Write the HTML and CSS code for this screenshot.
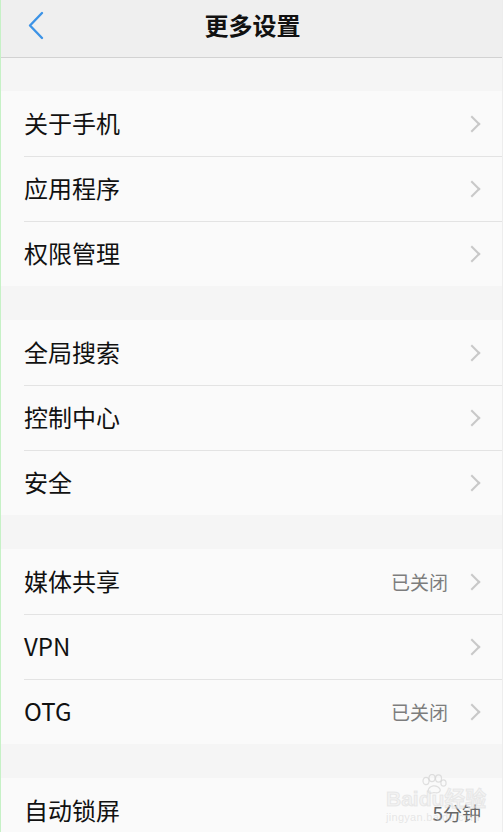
FILE: index.html
```html
<!DOCTYPE html>
<html lang="zh-CN">
<head>
<meta charset="utf-8">
<title>更多设置</title>
<link rel="stylesheet" href="styles.css">
</head>
<body>
<div class="screen">
  <header class="topbar">
    <span class="back">
      <svg width="20" height="30" viewBox="0 0 20 30"><path d="M15 2 L3 14.5 L15 27" fill="none" stroke="#3c93e6" stroke-width="2.4" stroke-linecap="round" stroke-linejoin="round"/></svg>
    </span>
    <h1 class="title">更多设置</h1>
  </header>

  <div class="gap first"></div>
  <section class="group">
    <div class="row"><span class="label">关于手机</span><span class="chev"></span></div>
    <div class="row"><span class="label">应用程序</span><span class="chev"></span></div>
    <div class="row"><span class="label">权限管理</span><span class="chev"></span></div>
  </section>

  <div class="gap"></div>
  <section class="group">
    <div class="row"><span class="label">全局搜索</span><span class="chev"></span></div>
    <div class="row"><span class="label">控制中心</span><span class="chev"></span></div>
    <div class="row"><span class="label">安全</span><span class="chev"></span></div>
  </section>

  <div class="gap"></div>
  <section class="group">
    <div class="row"><span class="label">媒体共享</span><span class="value">已关闭</span><span class="chev"></span></div>
    <div class="row"><span class="label">VPN</span><span class="chev"></span></div>
    <div class="row"><span class="label">OTG</span><span class="value">已关闭</span><span class="chev"></span></div>
  </section>

  <div class="gap"></div>
  <section class="group">
    <div class="row"><span class="label">自动锁屏</span><span class="value last">5分钟</span></div>
  </section>

  <div class="watermark">
    <svg class="paw" width="30" height="20" viewBox="0 0 30 20">
      <g fill="none" stroke="rgba(205,205,205,0.6)" stroke-width="1.2">
        <ellipse cx="8" cy="7" rx="3" ry="3.6"/>
        <ellipse cx="14" cy="4" rx="3" ry="3.6"/>
        <ellipse cx="20.5" cy="4.5" rx="3" ry="3.6"/>
        <ellipse cx="25.5" cy="9" rx="2.6" ry="3.2"/>
        <path d="M10 17 C11 11 19 10 22 15 C23 18 20 19.5 16 18.5 C13 19.5 9.5 19.5 10 17 Z"/>
      </g>
    </svg>
    <span class="wm-main">Baidu经验</span>
    <span class="wm-sub">jingyan.baidu.com</span>
  </div>
</div>
</body>
</html>
```

FILE: styles.css
```css
* { box-sizing: border-box; }
html, body { margin: 0; padding: 0; }
body {
  width: 503px;
  height: 832px;
  overflow: hidden;
  background: #f5f5f5;
  font-family: "Noto Sans CJK SC", "Noto Sans", sans-serif;
}
.screen {
  position: relative;
  width: 503px;
  height: 832px;
  background: #f5f5f5;
  border-left: 1px solid #c6f1c6;
  border-right: 1px solid #ededed;
  overflow: hidden;
}
.topbar {
  height: 58px;
  background: #efefef;
  border-bottom: 1px solid #d2d2d2;
  display: flex;
  align-items: center;
  justify-content: center;
  position: relative;
}
.back {
  position: absolute;
  left: 26px;
  top: 11px;
  width: 20px;
  height: 30px;
  display: block;
}
.back svg { display: block; }
.title {
  margin: 0 0 9px 2px;
  font-size: 24px;
  font-weight: 700;
  color: #111;
}
.gap { height: 34px; }
.gap.first { height: 33px; }
.group {
  background: #fafafa;
}
.row {
  height: 65px;
  display: flex;
  align-items: center;
  padding: 0 21px 0 23px;
  position: relative;
}
.row + .row::before {
  content: "";
  position: absolute;
  left: 23px;
  right: 0;
  top: 0;
  height: 1px;
  background: #e3e3e3;
}
.label {
  flex: 1;
  font-size: 24px;
  color: #111;
  line-height: 1;
  margin-top: -1px;
}
.value {
  font-size: 19px;
  color: #7d7d7d;
  margin-right: 21px;
  line-height: 1;
}
.value.last { margin-right: 0; color: #666; margin-top: 4px; }
.chev {
  width: 12px;
  height: 18px;
  display: block;
  position: relative;
}
.chev::after {
  content: "";
  position: absolute;
  left: -3px;
  top: 3px;
  width: 10px;
  height: 10px;
  border-top: 2px solid #c8c8c8;
  border-right: 2px solid #c8c8c8;
  transform: rotate(45deg);
}
.watermark {
  position: absolute;
  left: 385px;
  top: 774px;
  display: flex;
  flex-direction: column;
  align-items: flex-start;
  white-space: nowrap;
  pointer-events: none;
}
.paw {
  display: block;
  margin-left: 32px;
}
.wm-main {
  font-family: "Liberation Sans", "Noto Sans CJK SC", sans-serif;
  font-size: 21px;
  font-weight: 700;
  color: rgba(235,235,235,0.5);
  -webkit-text-stroke: 1px rgba(210,210,210,0.4);
  line-height: 1;
  margin-top: -6px;
}
.wm-sub {
  font-family: "Liberation Sans", sans-serif;
  font-size: 11px;
  line-height: 1;
  color: rgba(205,205,205,0.45);
  margin-top: 3px;
  letter-spacing: 0.3px;
}
```
